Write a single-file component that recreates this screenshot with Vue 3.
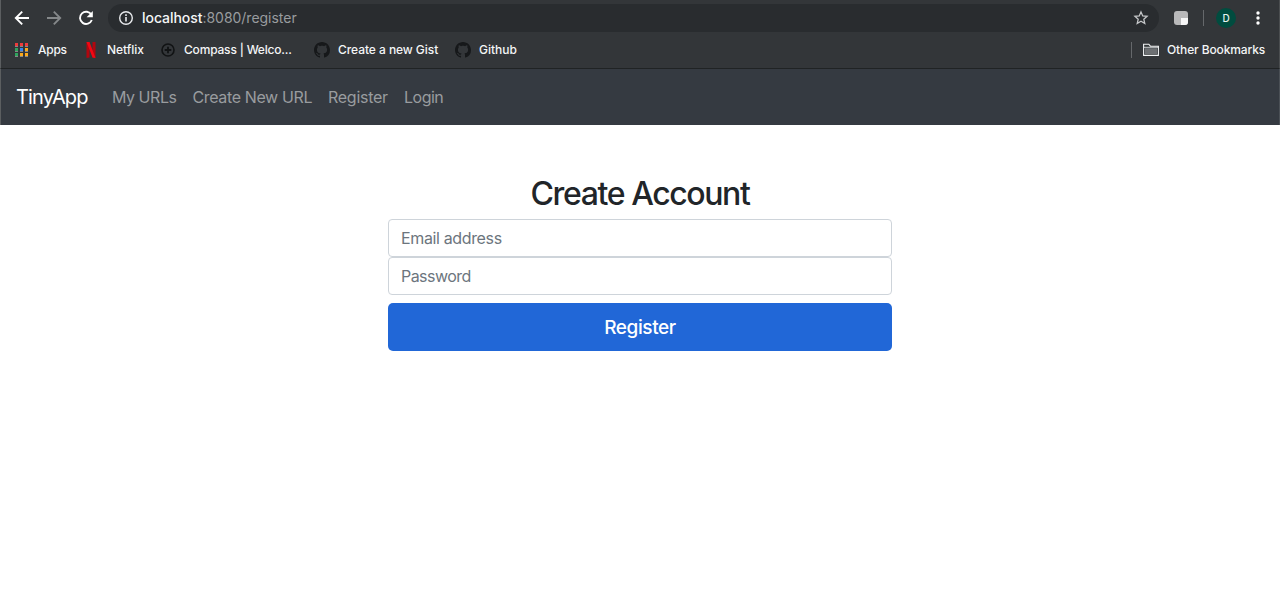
<script setup>
const apps = ['#ee3b3b', '#ee3b3b', '#ee3b3b', '#2fa45c', '#3484f0', '#fba91c', '#2fa45c', '#fba91c', '#fba91c']
const links = [
  { label: 'My URLs', cls: 'urls' },
  { label: 'Create New URL', cls: 'create' },
  { label: 'Register', cls: 'register' },
  { label: 'Login', cls: 'login' },
]
const githubPath = 'M8 0C3.58 0 0 3.58 0 8c0 3.54 2.29 6.53 5.47 7.59.4.07.55-.17.55-.38 0-.19-.01-.82-.01-1.49-2.01.37-2.53-.49-2.69-.94-.09-.23-.48-.94-.82-1.13-.28-.15-.68-.52-.01-.53.63-.01 1.08.58 1.23.82.72 1.21 1.87.87 2.33.66.07-.52.28-.87.51-1.07-1.78-.2-3.64-.89-3.64-3.95 0-.87.31-1.59.82-2.15-.08-.2-.36-1.02.08-2.12 0 0 .67-.21 2.2.82.64-.18 1.32-.27 2-.27s1.36.09 2 .27c1.53-1.04 2.2-.82 2.2-.82.44 1.1.16 1.92.08 2.12.51.56.82 1.27.82 2.15 0 3.07-1.87 3.75-3.65 3.95.29.25.54.73.54 1.48 0 1.07-.01 1.93-.01 2.2 0 .21.15.46.55.38A8.01 8.01 0 0 0 16 8c0-4.42-3.58-8-8-8z'
</script>

<template>
  <div class="window">
    <header class="chrome">
      <div class="toolbar">
        <svg class="tool" width="16" height="16" viewBox="0 0 16 16" fill="none" stroke="#fff" stroke-width="1.9"><path d="M15 8H2.2M8.2 1.6 1.8 8l6.4 6.4" /></svg>
        <svg class="tool" width="16" height="16" viewBox="0 0 16 16" fill="none" stroke="#85888a" stroke-width="1.9"><path d="M1 8h12.8M7.8 1.6 14.2 8l-6.4 6.4" /></svg>
        <svg class="tool" width="16" height="16" viewBox="0 0 16 16"><path d="M13.4 4.8A6.1 6.1 0 1 0 13.8 10" fill="none" stroke="#fff" stroke-width="1.9" /><path d="M14.8 1v6.2H8.6z" fill="#fff" /></svg>
        <div class="address">
          <svg width="16" height="16" viewBox="0 0 16 16"><circle cx="8" cy="8" r="6.3" fill="none" stroke="#e8eaed" stroke-width="1.4" /><path d="M7.2 7h1.6v4.5H7.2zM7.2 4.3h1.6v1.6H7.2z" fill="#e8eaed" /></svg>
          <span class="url"><b>localhost</b>:8080/register</span>
          <svg class="star" width="16" height="16" viewBox="0 0 16 16" fill="none" stroke="#c6c8ca" stroke-width="1.25"><path d="m8 1.9 1.75 4 4.35.4-3.3 2.9 1 4.3L8 11.2l-3.8 2.3 1-4.3-3.3-2.9 4.35-.4z" /></svg>
        </div>
        <svg class="extension" width="14" height="14" viewBox="0 0 14 14"><rect width="14" height="14" rx="3" fill="#b9b9ba" /><path d="M7 7h7v4a3 3 0 0 1-3 3H7z" fill="#f6f6f6" /></svg>
        <i class="tool-divider"></i>
        <span class="avatar">D</span>
        <svg class="menu" width="4" height="14" viewBox="0 0 4 14" fill="#fff"><circle cx="2" cy="2" r="1.7" /><circle cx="2" cy="7" r="1.7" /><circle cx="2" cy="12" r="1.7" /></svg>
      </div>
      <div class="bookmarks">
        <a class="bookmark b-apps">
          <svg width="14" height="14" viewBox="0 0 14 14"><g v-for="(c, i) in apps" :key="i"><rect :x="1 + (i % 3) * 5" :y="Math.floor(i / 3) * 5" width="3" height="3" :fill="c" /></g><path d="M1 3.5h3M6 3.5h3M11 3.5h3M1 8.5h3M6 8.5h3M11 8.5h3M1 13.5h3M6 13.5h3M11 13.5h3" stroke="#aaa" opacity=".7" /></svg>
          <span>Apps</span>
        </a>
        <a class="bookmark b-netflix">
          <svg width="10" height="16" viewBox="0 0 10 16"><path d="M.5 0h3v15.6L.5 16zM6.5 0h3v16l-3-.4z" fill="#b1060f" /><path d="M.5 0h3l6 16-3-.4z" fill="#f20713" /></svg>
          <span>Netflix</span>
        </a>
        <a class="bookmark b-compass">
          <svg width="14" height="14" viewBox="0 0 14 14" fill="none" stroke="#111314"><circle cx="7" cy="7" r="6" stroke-width="1.6" /><path d="M7 3.7v6.6M3.7 7h6.6" stroke-width="1.8" /></svg>
          <span>Compass | Welco...</span>
        </a>
        <a class="bookmark b-gist">
          <svg width="16" height="16" viewBox="0 0 16 16"><path :d="githubPath" fill="#16181a" /></svg>
          <span>Create a new Gist</span>
        </a>
        <a class="bookmark b-github">
          <svg width="16" height="16" viewBox="0 0 16 16"><path :d="githubPath" fill="#16181a" /></svg>
          <span>Github</span>
        </a>
        <a class="bookmark b-other">
          <svg width="16" height="14" viewBox="0 0 16 14"><path d="M.6 12.4V1.2h5.2l1.6 2h8v9.2z" fill="#33373a" stroke="#f1f3f4" stroke-width="1.1" /><path d="M2 5.2h12v5.9H2z" fill="#6d7073" /><path d="M1 4.3h14" stroke="#f1f3f4" stroke-width=".8" /></svg>
          <span>Other Bookmarks</span>
        </a>
      </div>
    </header>
    <nav class="navbar">
      <a class="brand">TinyApp</a>
      <a v-for="link in links" :key="link.label" class="link" :class="link.cls">{{ link.label }}</a>
    </nav>
    <main>
      <form class="form" @submit.prevent>
        <h1>Create Account</h1>
        <input class="email" type="email" placeholder="Email address" />
        <input class="password" type="password" placeholder="Password" />
        <button type="submit">Register</button>
      </form>
    </main>
  </div>
</template>

<style>
html, body { background: #fff; }
</style>

<style scoped>
* { box-sizing: border-box; }
.window { height: 603px; overflow: hidden; font-family: Inter, "Liberation Sans", sans-serif; }
svg { display: block; flex: none; }
.chrome { height: 69px; background: #333639; border-bottom: 1px solid #202324; border-left: 1px solid #5b5e60; border-right: 1px solid #4b4e50; }
.toolbar { display: flex; align-items: center; height: 36px; padding-left: 13px; }
.tool { margin-right: 16px; }
.address { display: flex; align-items: center; width: 1051px; height: 28px; margin-left: -2px; padding: 0 10px; border-radius: 14px; background: #292c2f; }
.url { margin-left: 8px; color: #999c9f; font-size: 14px; line-height: 20px; letter-spacing: -0.02px; white-space: nowrap; }
.url b { color: #f4f5f6; font-weight: 500; letter-spacing: -0.05px; }
.star { margin-left: auto; }
.extension { margin-left: 15px; }
.tool-divider { width: 1px; height: 16px; margin-left: 15px; background: #65686b; }
.avatar { width: 20px; height: 20px; margin-left: 12px; border-radius: 50%; background: #004c3f; color: #e7f2ef; font-size: 10px; font-weight: 500; line-height: 20px; text-align: center; }
.menu { margin-left: 20px; margin-right: -1px; }
.bookmarks { display: flex; align-items: center; height: 28px; padding-left: 13px; color: #f4f5f6; font-size: 12px; font-weight: 500; line-height: 16px; }
.bookmark { display: flex; align-items: center; flex: none; white-space: nowrap; }
.b-apps { width: 72px; gap: 10px; letter-spacing: -0.25px; }
.b-netflix { width: 75px; gap: 11px; letter-spacing: -0.02px; }
.b-compass { width: 153px; gap: 9px; letter-spacing: -0.19px; }
.b-gist { width: 141px; gap: 8px; letter-spacing: -0.06px; }
.b-github { gap: 8px; letter-spacing: -0.02px; }
.b-other { height: 16px; width: 134px; margin-left: auto; margin-right: 14px; padding-left: 11px; gap: 8px; border-left: 1px solid #65686b; letter-spacing: -0.12px; }
.navbar { display: flex; align-items: center; height: 56px; padding-left: 15px; background: #353a41; border-left: 1px solid #5b5e60; border-right: 1px solid #4b5056; color: #999c9f; font-size: 16px; line-height: 24px; white-space: nowrap; }
.brand { width: 96px; color: #fff; font-size: 20px; letter-spacing: -0.82px; }
.urls { width: 80.5px; letter-spacing: -0.47px; }
.create { width: 135.5px; letter-spacing: -0.37px; }
.register { width: 76px; letter-spacing: -0.27px; }
.login { letter-spacing: -0.5px; }
.form { display: flex; flex-direction: column; width: 504px; margin: 0 auto; padding-top: 50px; }
h1 { margin: 0 0 6px; color: #212529; font-size: 32px; font-weight: 500; line-height: 38px; letter-spacing: -1.4px; text-align: center; white-space: nowrap; }
input { height: 38px; padding: 6px 12px; border: 1px solid #ced4da; border-radius: 4px; background: #fff; font: 16px/24px Inter, "Liberation Sans", sans-serif; letter-spacing: -0.36px; outline: none; }
.password { letter-spacing: -0.55px; }
input::placeholder { color: #6c757d; opacity: 1; }
button { height: 48px; margin-top: 8px; padding: 1px 0 0; border: 0; border-radius: 5px; background: #2167d7; color: #fff; font: 500 19px/28px Inter, "Liberation Sans", sans-serif; letter-spacing: -0.4px; }
</style>
